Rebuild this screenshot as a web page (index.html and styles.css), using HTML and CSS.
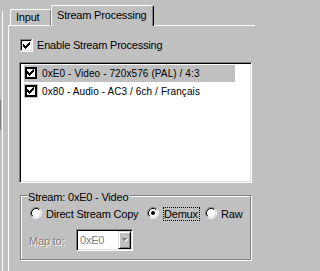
FILE: index.html
```html
<!DOCTYPE html>
<html>
<head>
<meta charset="utf-8">
<link rel="stylesheet" href="styles.css">
</head>
<body>
<div class="window">
  <div class="side"><div class="side-mark"></div><div class="side-edge"></div></div>
  <div class="main">
    <div class="tabs">
      <div class="tab-lead"></div>
      <div class="tab">Input</div>
      <div class="tab tab-active">Stream Processing</div>
      <div class="tab-fill"></div>
    </div>
    <div class="panel">
      <div class="check-row">
        <svg class="cb" width="13" height="13" viewBox="0 0 13 13" shape-rendering="crispEdges">
          <rect width="13" height="13" fill="#fff"/>
          <rect width="12" height="12" fill="#808080"/>
          <rect x="1" y="1" width="11" height="11" fill="#dfdfdf"/>
          <rect x="1" y="1" width="10" height="10" fill="#000"/>
          <rect x="2" y="2" width="9" height="9" fill="#fff"/>
          <path d="M9 3h1v1h-1zM8 4h2v1h-2zM3 5h1v1h-1zM7 5h3v1h-3zM3 6h2v1h-2zM6 6h3v1h-3zM3 7h5v1h-5zM4 8h3v1h-3zM5 9h1v1h-1z" fill="#000"/>
        </svg>
        <span>Enable Stream Processing</span>
      </div>
      <div class="listbox">
        <div class="list-item selected">
          <svg class="lcb" width="14" height="14" viewBox="0 0 14 14" shape-rendering="crispEdges">
            <rect width="14" height="14" fill="#c0c0c0"/>
            <rect x="1" y="1" width="12" height="12" fill="#000"/>
            <rect x="3" y="3" width="8" height="8" fill="#fff"/>
            <path d="M9 3h1v1h-1zM8 4h2v1h-2zM3 5h1v1h-1zM7 5h3v1h-3zM3 6h2v1h-2zM6 6h3v1h-3zM3 7h5v1h-5zM4 8h3v1h-3zM5 9h1v1h-1z" fill="#000"/>
          </svg>
          <span>0xE0 - Video - 720x576 (PAL) / 4:3</span>
        </div>
        <div class="list-item">
          <svg class="lcb" width="14" height="14" viewBox="0 0 14 14" shape-rendering="crispEdges">
            <rect width="14" height="14" fill="#c0c0c0"/>
            <rect x="1" y="1" width="12" height="12" fill="#000"/>
            <rect x="3" y="3" width="8" height="8" fill="#fff"/>
            <path d="M9 3h1v1h-1zM8 4h2v1h-2zM3 5h1v1h-1zM7 5h3v1h-3zM3 6h2v1h-2zM6 6h3v1h-3zM3 7h5v1h-5zM4 8h3v1h-3zM5 9h1v1h-1z" fill="#000"/>
          </svg>
          <span>0x80 - Audio - AC3 / 6ch / Français</span>
        </div>
      </div>
      <div class="group">
        <div class="group-label">Stream: 0xE0 - Video</div>
        <div class="radios">
          <div class="radio opt-copy">
            <svg width="12" height="12" viewBox="0 0 12 12">
              <circle cx="6" cy="6" r="4.5" fill="#fff"/>
              <path d="M2.11 9.89A5.5 5.5 0 0 1 9.89 2.11" fill="none" stroke="#808080"/>
              <path d="M2.11 9.89A5.5 5.5 0 0 0 9.89 2.11" fill="none" stroke="#fff"/>
              <path d="M2.82 9.18A4.5 4.5 0 0 1 9.18 2.82" fill="none" stroke="#000"/>
              <path d="M2.82 9.18A4.5 4.5 0 0 0 9.18 2.82" fill="none" stroke="#dfdfdf"/>
            </svg>
            <span class="radio-text">Direct Stream Copy</span>
          </div>
          <div class="radio opt-demux">
            <svg width="12" height="12" viewBox="0 0 12 12">
              <circle cx="6" cy="6" r="4.5" fill="#fff"/>
              <path d="M2.11 9.89A5.5 5.5 0 0 1 9.89 2.11" fill="none" stroke="#808080"/>
              <path d="M2.11 9.89A5.5 5.5 0 0 0 9.89 2.11" fill="none" stroke="#fff"/>
              <path d="M2.82 9.18A4.5 4.5 0 0 1 9.18 2.82" fill="none" stroke="#000"/>
              <path d="M2.82 9.18A4.5 4.5 0 0 0 9.18 2.82" fill="none" stroke="#dfdfdf"/>
              <circle cx="6" cy="6" r="2" fill="#000"/>
            </svg>
            <span class="radio-text focus">Demux</span>
          </div>
          <div class="radio">
            <svg width="12" height="12" viewBox="0 0 12 12">
              <circle cx="6" cy="6" r="4.5" fill="#fff"/>
              <path d="M2.11 9.89A5.5 5.5 0 0 1 9.89 2.11" fill="none" stroke="#808080"/>
              <path d="M2.11 9.89A5.5 5.5 0 0 0 9.89 2.11" fill="none" stroke="#fff"/>
              <path d="M2.82 9.18A4.5 4.5 0 0 1 9.18 2.82" fill="none" stroke="#000"/>
              <path d="M2.82 9.18A4.5 4.5 0 0 0 9.18 2.82" fill="none" stroke="#dfdfdf"/>
            </svg>
            <span class="radio-text">Raw</span>
          </div>
        </div>
        <div class="map-row">
          <span class="disabled-label">Map to:</span>
          <div class="combo">
            <span class="combo-text">0xE0</span>
            <div class="combo-btn">
              <svg width="6" height="4" viewBox="0 0 6 4" shape-rendering="crispEdges">
                <path d="M1 1h5v1h-1v1h-1v1h-1v-1h-1v-1h-1z" fill="#fff"/>
                <path d="M0 0h5v1h-1v1h-1v1h-1v-1h-1v-1h-1z" fill="#808080"/>
              </svg>
            </div>
          </div>
        </div>
      </div>
    </div>
  </div>
</div>
</body>
</html>
```
FILE: styles.css
```css
html, body {
  margin: 0;
  padding: 0;
  background: #c0c0c0;
}
body {
  font-family: "Liberation Sans", Arial, sans-serif;
  font-size: 11px;
  letter-spacing: -0.2px;
  color: #000;
}
.window {
  display: flex;
  width: 255px;
  height: 271px;
  overflow: hidden;
  background: #c0c0c0;
}
.side {
  display: flex;
  align-items: flex-start;
  width: 8px;
  flex: none;
}
.side-mark {
  width: 1px;
  height: 30px;
  margin-top: 100px;
  background: #808080;
  flex: none;
}
.side-edge {
  width: 1px;
  margin: 11px 0 0 1px;
  align-self: stretch;
  background: #fff;
}
.main {
  flex: 1;
  min-width: 0;
  display: flex;
  flex-direction: column;
}
.tabs {
  display: flex;
  align-items: flex-end;
  height: 26px;
  flex: none;
}
.tab-lead {
  width: 2px;
  border-bottom: 1px solid #fff;
}
.tab {
  box-sizing: border-box;
  width: 41px;
  height: 17px;
  padding: 1px 0 0 5px;
  line-height: 13px;
  white-space: nowrap;
  border-left: 1px solid #fff;
  border-top: 1px solid #fff;
  border-right: 1px solid #808080;
  border-bottom: 1px solid #fff;
  border-top-left-radius: 2px;
  border-top-right-radius: 2px;
}
.tab-active {
  width: 103px;
  height: 21px;
  padding: 3px 0 0 5px;
  border-right-color: #000;
  border-bottom: none;
  box-shadow: inset -1px 0 0 #808080;
}
.tab-fill {
  flex: 1;
  border-bottom: 1px solid #fff;
}
.panel {
  flex: 1;
  border-left: 1px solid #fff;
  display: flex;
  flex-direction: column;
  align-items: flex-start;
}
.check-row {
  display: flex;
  align-items: center;
  gap: 4px;
  height: 13px;
  line-height: 13px;
  margin: 13px 0 0 11px;
  white-space: nowrap;
}
.cb, .lcb {
  flex: none;
  display: block;
}
.listbox {
  box-sizing: border-box;
  width: 233px;
  height: 121px;
  margin: 10px 0 0 10px;
  padding: 2px 0 0 4px;
  background: #fff;
  border: 1px solid;
  border-color: #808080 #fff #fff #808080;
  box-shadow: inset 1px 1px 0 #000, inset -1px -1px 0 #dfdfdf;
}
.list-item {
  display: flex;
  align-items: flex-start;
  width: 211px;
  height: 17px;
  margin-bottom: 1px;
  font-size: 10px;
  letter-spacing: 0.1px;
  line-height: 17px;
  white-space: nowrap;
}
.list-item.selected {
  background: #c0c0c0;
}
.list-item .lcb {
  margin-top: 1px;
}
.list-item span {
  margin-left: 4px;
}
.group {
  box-sizing: border-box;
  width: 231px;
  height: 65px;
  margin: 12px 0 0 11px;
  border: 1px solid #808080;
  box-shadow: inset 1px 1px 0 #fff, 1px 1px 0 #fff;
  display: flex;
  flex-direction: column;
  align-items: flex-start;
}
.group-label {
  margin: -5px 0 0 6px;
  padding: 0 1px;
  line-height: 13px;
  background: #c0c0c0;
  white-space: nowrap;
}
.radios {
  display: flex;
  align-items: flex-start;
  margin: 3px 0 0 9px;
}
.radio {
  display: flex;
  align-items: flex-start;
  height: 14px;
  white-space: nowrap;
}
.radio svg {
  flex: none;
  display: block;
}
.opt-copy {
  width: 117px;
}
.opt-demux {
  width: 58px;
}
.radio-text {
  margin-left: 4px;
  line-height: 14px;
}
.radio-text.focus {
  line-height: 12px;
  border: 1px dotted #000;
  padding-right: 1px;
}
.map-row {
  display: flex;
  align-items: flex-start;
  margin: 8px 0 0 8px;
}
.disabled-label {
  width: 47px;
  margin-top: 6px;
  line-height: 13px;
  color: #808080;
  text-shadow: 1px 1px 0 #fff;
  white-space: nowrap;
}
.combo {
  box-sizing: border-box;
  width: 57px;
  height: 22px;
  display: flex;
  padding: 1px;
  background: #fff;
  border: 1px solid;
  border-color: #808080 #fff #fff #808080;
  box-shadow: inset 1px 1px 0 #000, inset -1px -1px 0 #dfdfdf;
}
.combo-text {
  padding: 1px 0 0 2px;
  line-height: 17px;
  color: #808080;
}
.combo-btn {
  box-sizing: border-box;
  width: 13px;
  height: 18px;
  margin-left: auto;
  display: flex;
  align-items: center;
  justify-content: center;
  background: #c0c0c0;
  border: 1px solid;
  border-color: #dfdfdf #000 #000 #dfdfdf;
  box-shadow: inset 1px 1px 0 #fff, inset -1px -1px 0 #808080;
}
.combo-btn svg {
  display: block;
}
```
